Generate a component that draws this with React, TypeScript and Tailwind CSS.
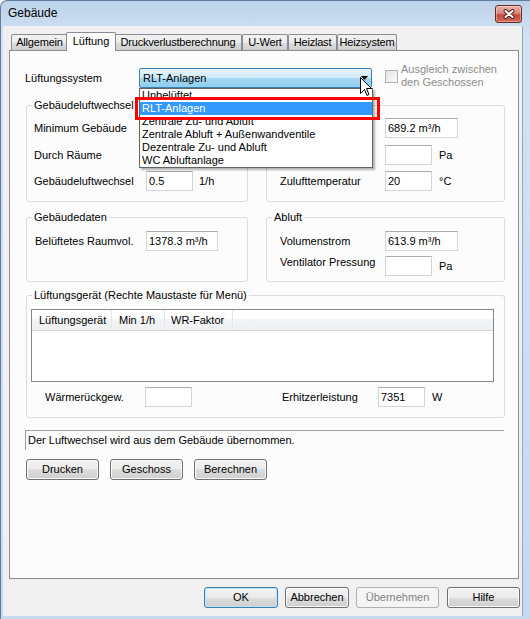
import React from "react";

const systems = [
  "Unbelüftet",
  "RLT-Anlagen",
  "Zentrale Zu- und Abluft",
  "Zentrale Abluft + Außenwandventile",
  "Dezentrale Zu- und Abluft",
  "WC Abluftanlage",
];

const tabs = [
  { label: "Allgemein", w: "w-[57px]" },
  { label: "Lüftung", w: "w-[50px]", active: true },
  { label: "Druckverlustberechnung", w: "w-[128px]" },
  { label: "U-Wert", w: "w-[46px]" },
  { label: "Heizlast", w: "w-[49px]" },
  { label: "Heizsystem", w: "w-[60px]" },
];

function Field({ value = "", w = "w-[47px]" }: { value?: string; w?: string }) {
  return (
    <div
      className={`flex h-[20px] shrink-0 items-center border border-[#d2d6dc] border-t-[#abadb3] bg-white pl-[2px] ${w}`}
    >
      {value}
    </div>
  );
}

function Group({
  title,
  className = "",
  children,
}: {
  title?: string;
  className?: string;
  children?: React.ReactNode;
}) {
  return (
    <div className={`shrink-0 rounded-[3px] border border-[#d5dfe5] ${className}`}>
      {title ? (
        <div className="-mt-[7px] ml-[5px] w-fit bg-[#fcfcfc] px-[2px] leading-[13px]">{title}</div>
      ) : (
        <div className="-mt-[7px] h-[13px]" />
      )}
      {children}
    </div>
  );
}

function Button({
  label,
  className = "",
  variant = "normal",
}: {
  label: string;
  className?: string;
  variant?: "normal" | "default" | "disabled";
}) {
  const look =
    variant === "default"
      ? "border-[#3c7fb1] shadow-[inset_0_0_0_1px_#bfe3f7] bg-[linear-gradient(to_bottom,#f2f2f2_0%,#ebebeb_50%,#dddddd_50%,#cfcfcf_100%)]"
      : variant === "disabled"
        ? "border-[#adb2b5] bg-[#f4f4f4] text-[#838383]"
        : "border-[#707070] shadow-[inset_0_0_0_1px_#fbfbfb] bg-[linear-gradient(to_bottom,#f2f2f2_0%,#ebebeb_50%,#dddddd_50%,#cfcfcf_100%)]";
  return (
    <button
      type="button"
      className={`flex h-[21px] shrink-0 items-center justify-center rounded-[3px] border ${look} ${className}`}
    >
      {label}
    </button>
  );
}

export default function App() {
  return (
    <div className="flex h-[619px] w-[530px] flex-col overflow-hidden rounded-tl-[7px] border-l border-t border-[#5f7d9e] bg-[linear-gradient(to_bottom,#bcd2ea_0%,#d3e2f2_6%,#c6daef_100%)] font-['Liberation_Sans',Arial,sans-serif] text-[11px] leading-[13px] text-black">
      {/* Title bar */}
      <div className="flex h-[25px] shrink-0 items-start justify-between pl-[7px] pr-[8px]">
        <div className="pt-[5px] text-[12px] leading-[14px]">Gebäude</div>
        <div className="mt-[4px] flex h-[18px] w-[27px] items-center justify-center rounded-[3px] border border-[#6b2a1f] bg-[linear-gradient(to_bottom,#ebb3a6_0%,#d98a7c_45%,#c44a3c_55%,#cf6b5d_100%)] shadow-[inset_0_0_0_1px_rgba(255,255,255,0.35)]">
          <svg width="12" height="10" viewBox="0 0 12 10">
            <path d="M2.5 2L9.5 8M9.5 2L2.5 8" stroke="#4a1a14" strokeWidth="3.8" strokeLinecap="round" />
            <path d="M2.5 2L9.5 8M9.5 2L2.5 8" stroke="#ffffff" strokeWidth="2" strokeLinecap="round" />
          </svg>
        </div>
      </div>

      {/* Client area */}
      <div className="mb-[3px] ml-[2px] mr-[7px] flex flex-1 flex-col border-r border-[#8ea7c2] bg-[#f0f0f0] pl-[6px] pr-[3px] pt-[6px]">
        {/* Tabs */}
        <div className="flex h-[18px] shrink-0 items-end pl-[2px]">
          {tabs.map((t) =>
            t.active ? (
              <div
                key={t.label}
                className={`relative z-10 -mx-[2px] -mb-[1px] flex h-[19px] shrink-0 items-center justify-center rounded-t-[2px] border border-b-0 border-[#898c95] bg-[#fcfcfc] pb-[2px] ${t.w}`}
              >
                {t.label}
              </div>
            ) : (
              <div
                key={t.label}
                className={`flex h-[16px] shrink-0 items-center justify-center rounded-t-[2px] border border-b-0 border-[#898c95] bg-[linear-gradient(to_bottom,#f2f2f2_0%,#ebebeb_50%,#dddddd_51%,#cfcfcf_100%)] tracking-[-0.2px] ${t.w}`}
              >
                {t.label}
              </div>
            ),
          )}
        </div>

        {/* Tab page */}
        <div className="flex h-[529px] w-[510px] shrink-0 flex-col border border-[#898c95] bg-[#fcfcfc]">
          {/* Lüftungssystem */}
          <div className="mt-[17px] flex h-[20px] items-center">
            <div className="ml-[15px] w-[114px]">Lüftungssystem</div>
            <div className="relative h-[20px] w-[233px] shrink-0">
              <div className="flex h-full items-center justify-between rounded-[2px] border border-[#3c7fb1] bg-[linear-gradient(to_bottom,#e6f4fc_0%,#cfeaf8_50%,#a9d9f3_50%,#8fcdee_100%)] pl-[3px] pr-[3px]">
                <span>RLT-Anlagen</span>
                <svg width="7" height="4" viewBox="0 0 7 4">
                  <path d="M0 0H7L3.5 4Z" fill="#000" />
                </svg>
              </div>

              {/* Open list */}
              <div className="absolute left-0 top-[20px] z-20 w-[234px] border border-[#646464] bg-white shadow-[2px_2px_2px_rgba(0,0,0,0.3)]">
                {systems.map((s) => (
                  <div
                    key={s}
                    className={`h-[13px] whitespace-nowrap pl-[2px] leading-[13px] ${
                      s === "RLT-Anlagen" ? "bg-[#3399ff] text-white" : ""
                    }`}
                  >
                    {s}
                  </div>
                ))}
              </div>

              {/* Highlight frame */}
              <div className="absolute -left-[4px] top-[29px] z-30 h-[23px] w-[245px] border-[3px] border-[#ff0000]" />

              {/* Mouse pointer */}
              <svg
                width="13"
                height="20"
                viewBox="0 0 13 20"
                className="absolute left-[221px] top-[9px] z-40"
              >
                <path
                  d="M0.5 0.5V16.5L4.5 12.5L7 18.5L9 17.5L6.5 11.5H11.5Z"
                  fill="#ffffff"
                  stroke="#000000"
                  strokeWidth="1"
                  strokeLinejoin="round"
                />
              </svg>
            </div>

            <div className="-mt-[4px] ml-[13px] flex items-center gap-[3px] text-[#8d8d8d]">
              <div className="h-[13px] w-[13px] shrink-0 border border-[#b1b1b1] bg-[linear-gradient(135deg,#e4e4e4,#fafafa)]" />
              <div className="leading-[13px]">
                Ausgleich zwischen
                <br />
                den Geschossen
              </div>
            </div>
          </div>

          {/* Gebäudeluftwechsel / Zuluft (partly under the open list) */}
          <div className="ml-[16px] mt-[17px] flex gap-[18px]">
            <Group title="Gebäudeluftwechsel" className="h-[97px] w-[222px]">
              <div className="mt-[6px] flex h-[20px] items-center pl-[7px]">
                <div className="w-[112px]">Minimum Gebäude</div>
                <Field />
              </div>
              <div className="mt-[7px] flex h-[20px] items-center pl-[7px]">
                <div className="w-[112px]">Durch Räume</div>
                <Field />
              </div>
              <div className="mt-[6px] flex h-[20px] items-center pl-[7px]">
                <div className="w-[112px]">Gebäudeluftwechsel</div>
                <Field value="0.5" />
                <div className="ml-[6px]">1/h</div>
              </div>
            </Group>

            <Group className="h-[97px] w-[239px]">
              <div className="mt-[6px] flex h-[20px] items-center pl-[118px]">
                <Field value="689.2 m³/h" w="w-[73px]" />
              </div>
              <div className="mt-[7px] flex h-[20px] items-center pl-[118px]">
                <Field />
                <div className="ml-[7px]">Pa</div>
              </div>
              <div className="mt-[6px] flex h-[20px] items-center pl-[13px]">
                <div className="w-[105px]">Zulufttemperatur</div>
                <Field value="20" />
                <div className="ml-[7px]">°C</div>
              </div>
            </Group>
          </div>

          {/* Gebäudedaten / Abluft */}
          <div className="ml-[16px] mt-[15px] flex gap-[18px]">
            <Group title="Gebäudedaten" className="h-[65px] w-[222px]">
              <div className="mt-[7px] flex h-[20px] items-center pl-[8px]">
                <div className="w-[111px]">Belüftetes Raumvol.</div>
                <Field value="1378.3 m³/h" w="w-[72px]" />
              </div>
            </Group>

            <Group title="Abluft" className="h-[65px] w-[239px]">
              <div className="mt-[7px] flex h-[20px] items-center pl-[13px]">
                <div className="w-[105px]">Volumenstrom</div>
                <Field value="613.9 m³/h" w="w-[73px]" />
              </div>
              <div className="mt-[5px] flex items-start pl-[13px]">
                <div className="w-[105px]">Ventilator Pressung</div>
                <Field />
                <div className="ml-[7px] mt-[4px]">Pa</div>
              </div>
            </Group>
          </div>

          {/* Lüftungsgerät */}
          <div className="ml-[16px] mt-[13px] flex">
            <Group title="Lüftungsgerät (Rechte Maustaste für Menü)" className="h-[123px] w-[479px]">
              <div className="ml-[4px] mt-[7px] h-[73px] w-[463px] border border-[#828790] bg-white">
                <div className="flex h-[21px] border-b border-[#d5d5d5] bg-[linear-gradient(to_bottom,#ffffff_0%,#ffffff_45%,#f3f4f6_45%,#eef0f2_100%)]">
                  <div className="flex w-[80px] items-center border-r border-[#e3e8ee] pl-[7px]">Lüftungsgerät</div>
                  <div className="flex w-[53px] items-center border-r border-[#e3e8ee] pl-[7px]">Min 1/h</div>
                  <div className="flex w-[68px] items-center border-r border-[#e3e8ee] pl-[6px]">WR-Faktor</div>
                </div>
              </div>
              <div className="mt-[5px] flex h-[20px] items-center pl-[18px]">
                <div className="w-[100px]">Wärmerückgew.</div>
                <Field />
                <div className="ml-[90px] w-[96px]">Erhitzerleistung</div>
                <Field value="7351" />
                <div className="ml-[7px]">W</div>
              </div>
            </Group>
          </div>

          {/* Status */}
          <div className="ml-[15px] mt-[12px] flex h-[20px] w-[479px] items-center border-l border-t border-[#a0a0a0] pl-[2px]">
            Der Luftwechsel wird aus dem Gebäude übernommen.
          </div>

          {/* Actions */}
          <div className="ml-[16px] mt-[9px] flex gap-[11px]">
            <Button label="Drucken" className="w-[73px]" />
            <Button label="Geschoss" className="w-[73px]" />
            <Button label="Berechnen" className="w-[73px]" />
          </div>
        </div>

        {/* Dialog buttons */}
        <div className="mt-[8px] flex gap-[7px] pl-[195px]">
          <Button label="OK" variant="default" className="w-[74px]" />
          <Button label="Abbrechen" className="w-[64px]" />
          <Button label="Übernehmen" variant="disabled" className="w-[83px]" />
          <Button label="Hilfe" className="ml-[1px] w-[73px]" />
        </div>
      </div>
    </div>
  );
}
